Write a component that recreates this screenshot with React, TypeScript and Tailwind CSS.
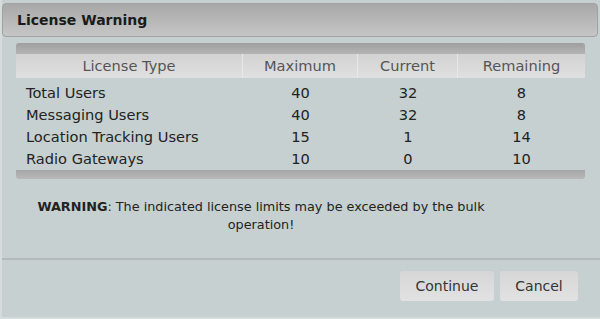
import React from "react";

const rows = [
  ["Total Users", "40", "32", "8"],
  ["Messaging Users", "40", "32", "8"],
  ["Location Tracking Users", "15", "1", "14"],
  ["Radio Gateways", "10", "0", "10"],
];

export default function App() {
  return (
    <div
      className="w-[600px] h-[319px] bg-[#c6d0d0] flex flex-col text-[#222] border-l-2 border-b-2 border-[#d4dcdc]"
      style={{ fontFamily: '"DejaVu Sans", Verdana, sans-serif' }}
    >
      <div className="mt-[3px] ml-[0px] mr-[2px] h-[34px] rounded-[4px] border border-[#a2a2a2] bg-gradient-to-b from-[#a8a8a8] to-[#c6c6c6] flex items-center pl-[14px]">
        <span className="text-[14px] font-bold text-[#1a1a1a]">License Warning</span>
      </div>
      <div className="mt-[6px] ml-[14px] mr-[15px]">
        <div className="h-[11px] rounded-t-[3px] bg-gradient-to-b from-[#9f9f9f] to-[#b4b4b4]" />
        <div className="grid grid-cols-[227px_115px_100px_1fr] text-[14.6px]">
          <div className="h-[24px] flex items-center justify-center bg-gradient-to-b from-[#d2d2d2] to-[#e0e0e0] border-r border-[#e8e8e8] text-[#555]">License Type</div>
          <div className="h-[24px] flex items-center justify-center bg-gradient-to-b from-[#d2d2d2] to-[#e0e0e0] border-r border-[#e8e8e8] text-[#555]">Maximum</div>
          <div className="h-[24px] flex items-center justify-center bg-gradient-to-b from-[#d2d2d2] to-[#e0e0e0] border-r border-[#e8e8e8] text-[#555]">Current</div>
          <div className="h-[24px] flex items-center justify-center bg-gradient-to-b from-[#d2d2d2] to-[#e0e0e0] text-[#555]">Remaining</div>
          {rows.map((r, i) => (
            <React.Fragment key={i}>
              <div className={`h-[22px] flex items-center pl-[10px] ${i === 0 ? "mt-[4px]" : ""}`}>{r[0]}</div>
              <div className={`h-[22px] flex items-center justify-center ${i === 0 ? "mt-[4px]" : ""}`}>{r[1]}</div>
              <div className={`h-[22px] flex items-center justify-center ${i === 0 ? "mt-[4px]" : ""}`}>{r[2]}</div>
              <div className={`h-[22px] flex items-center justify-center ${i === 0 ? "mt-[4px]" : ""}`}>{r[3]}</div>
            </React.Fragment>
          ))}
        </div>
        <div className="h-[9px] rounded-b-[3px] bg-gradient-to-b from-[#a6a6a6] to-[#b8b8b8]" />
      </div>
      <div className="mt-[19px] ml-[22px] w-[474px] text-center text-[12.8px] leading-[18px] text-[#222]">
        <span className="font-bold">WARNING</span>: The indicated license limits may be exceeded by the bulk operation!
      </div>
      <div className="mt-[24px] h-[2px] bg-[#b2baba]" />
      <div className="flex justify-end gap-[6px] mt-[11px] mr-[22px]">
        <button className="w-[94px] h-[30px] rounded-[3px] bg-gradient-to-b from-[#d6d6d6] to-[#e2e2e2] text-[14px] text-[#333]">Continue</button>
        <button className="w-[78px] h-[30px] rounded-[3px] bg-gradient-to-b from-[#d6d6d6] to-[#e2e2e2] text-[14px] text-[#333]">Cancel</button>
      </div>
    </div>
  );
}
